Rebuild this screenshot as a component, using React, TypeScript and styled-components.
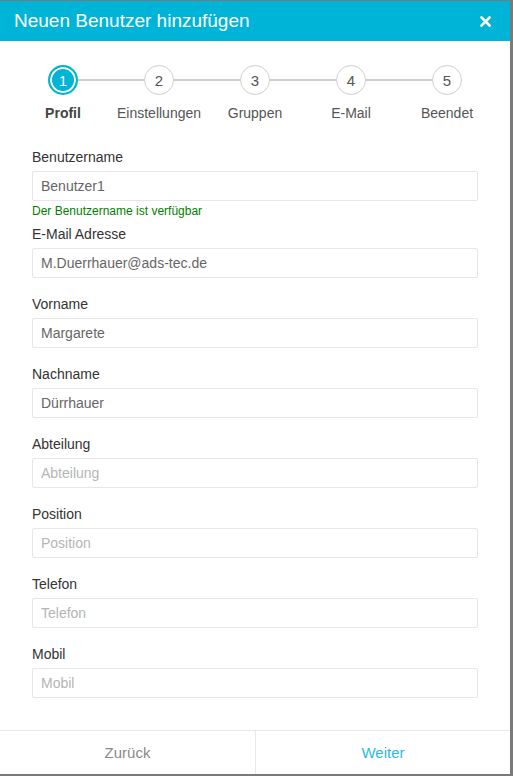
import * as React from "react";
import styled, { createGlobalStyle } from "styled-components";

const GlobalStyle = createGlobalStyle`
  html, body {
    margin: 0;
    padding: 0;
    background: #7a7a7a;
    font-family: "Liberation Sans", Arial, sans-serif;
  }
  * { box-sizing: border-box; }
`;

const Modal = styled.div`
  width: 510px;
  height: 773px;
  margin-top: 1px;
  background: #fff;
  display: flex;
  flex-direction: column;
`;

const Header = styled.div`
  height: 40px;
  background: #00b4d8;
  display: flex;
  align-items: center;
  justify-content: space-between;
  padding: 0 19px 0 14px;
`;

const Title = styled.h1`
  margin: 0;
  color: #fff;
  font: 400 19px/20px "Liberation Sans", Arial, sans-serif;
`;

const CloseButton = styled.button`
  border: 0;
  background: none;
  padding: 0;
  width: 11px;
  height: 11px;
  display: flex;
  cursor: pointer;
`;

const Stepper = styled.ol`
  list-style: none;
  margin: 0;
  padding: 24px 15px 0;
  display: grid;
  grid-template-columns: repeat(5, 96px);
`;

const Step = styled.li<{ $last?: boolean }>`
  position: relative;
  display: flex;
  flex-direction: column;
  align-items: center;
  &::after {
    content: "";
    display: ${p => (p.$last ? "none" : "block")};
    position: absolute;
    top: 14px;
    left: calc(50% + 15px);
    width: 66px;
    height: 2px;
    background: #cfcfcf;
  }
`;

const StepCircle = styled.span<{ $active?: boolean }>`
  width: 30px;
  height: 30px;
  border-radius: 50%;
  display: flex;
  align-items: center;
  justify-content: center;
  font: 400 15px/1 "Liberation Sans", Arial, sans-serif;
  color: ${p => (p.$active ? "#fff" : "#555")};
  background: ${p => (p.$active ? "#00b4d8" : "#fff")};
  border: ${p => (p.$active ? "2px solid #00b4d8" : "1px solid #cfcfcf")};
  box-shadow: ${p => (p.$active ? "inset 0 0 0 2px #fff" : "none")};
`;

const StepLabel = styled.span<{ $active?: boolean }>`
  margin-top: 8px;
  font: ${p => (p.$active ? 700 : 400)} 14px/20px "Liberation Sans", Arial, sans-serif;
  color: ${p => (p.$active ? "#444" : "#555")};
  white-space: nowrap;
`;

const Form = styled.form`
  flex: 1;
  padding: 24px 32px 0;
  display: flex;
  flex-direction: column;
`;

const FieldGroup = styled.div<{ $tight?: boolean }>`
  display: flex;
  flex-direction: column;
  margin-bottom: ${p => (p.$tight ? "3px" : "16px")};
`;

const Label = styled.label`
  font: 400 14px/20px "Liberation Sans", Arial, sans-serif;
  color: #333;
  margin-bottom: 4px;
`;

const Input = styled.input`
  width: 446px;
  height: 30px;
  border: 1px solid #e6e6e6;
  border-radius: 2px;
  padding: 0 8px;
  font: 400 14px "Liberation Sans", Arial, sans-serif;
  color: #666;
  outline: none;
  &::placeholder {
    color: #b5b5b5;
  }
`;

const HelpText = styled.span`
  font: 400 12px/20px "Liberation Sans", Arial, sans-serif;
  color: #008000;
`;

const Footer = styled.div`
  height: 44px;
  border-top: 1px solid #e8e8e8;
  display: grid;
  grid-template-columns: 255px 1fr;
`;

const FooterButton = styled.button<{ $primary?: boolean }>`
  border: 0;
  border-left: ${p => (p.$primary ? "1px solid #e8e8e8" : "0")};
  background: #fff;
  font: 400 15px "Liberation Sans", Arial, sans-serif;
  color: ${p => (p.$primary ? "#29bce3" : "#888")};
  cursor: pointer;
`;

const steps = ["Profil", "Einstellungen", "Gruppen", "E-Mail", "Beendet"];

const fields = [
  { label: "Vorname", value: "Margarete" },
  { label: "Nachname", value: "Dürrhauer" },
  { label: "Abteilung", value: "" },
  { label: "Position", value: "" },
  { label: "Telefon", value: "" },
  { label: "Mobil", value: "" },
];

export default function App() {
  return (
    <>
      <GlobalStyle />
      <Modal>
        <Header>
          <Title>Neuen Benutzer hinzufügen</Title>
          <CloseButton aria-label="Schließen">
            <svg width="11" height="11" viewBox="0 0 11 11">
              <path d="M1.5 1.5 L9.5 9.5 M9.5 1.5 L1.5 9.5" stroke="#fff" strokeWidth="2.6" strokeLinecap="square" />
            </svg>
          </CloseButton>
        </Header>
        <Stepper>
          {steps.map((s, i) => (
            <Step key={s} $last={i === steps.length - 1}>
              <StepCircle $active={i === 0}>{i + 1}</StepCircle>
              <StepLabel $active={i === 0}>{s}</StepLabel>
            </Step>
          ))}
        </Stepper>
        <Form>
          <FieldGroup $tight>
            <Label>Benutzername</Label>
            <Input defaultValue="Benutzer1" />
            <HelpText>Der Benutzername ist verfügbar</HelpText>
          </FieldGroup>
          <FieldGroup>
            <Label>E-Mail Adresse</Label>
            <Input defaultValue="M.Duerrhauer@ads-tec.de" />
          </FieldGroup>
          {fields.map(f => (
            <FieldGroup key={f.label}>
              <Label>{f.label}</Label>
              <Input defaultValue={f.value} placeholder={f.label} />
            </FieldGroup>
          ))}
        </Form>
        <Footer>
          <FooterButton>Zurück</FooterButton>
          <FooterButton $primary>Weiter</FooterButton>
        </Footer>
      </Modal>
    </>
  );
}
